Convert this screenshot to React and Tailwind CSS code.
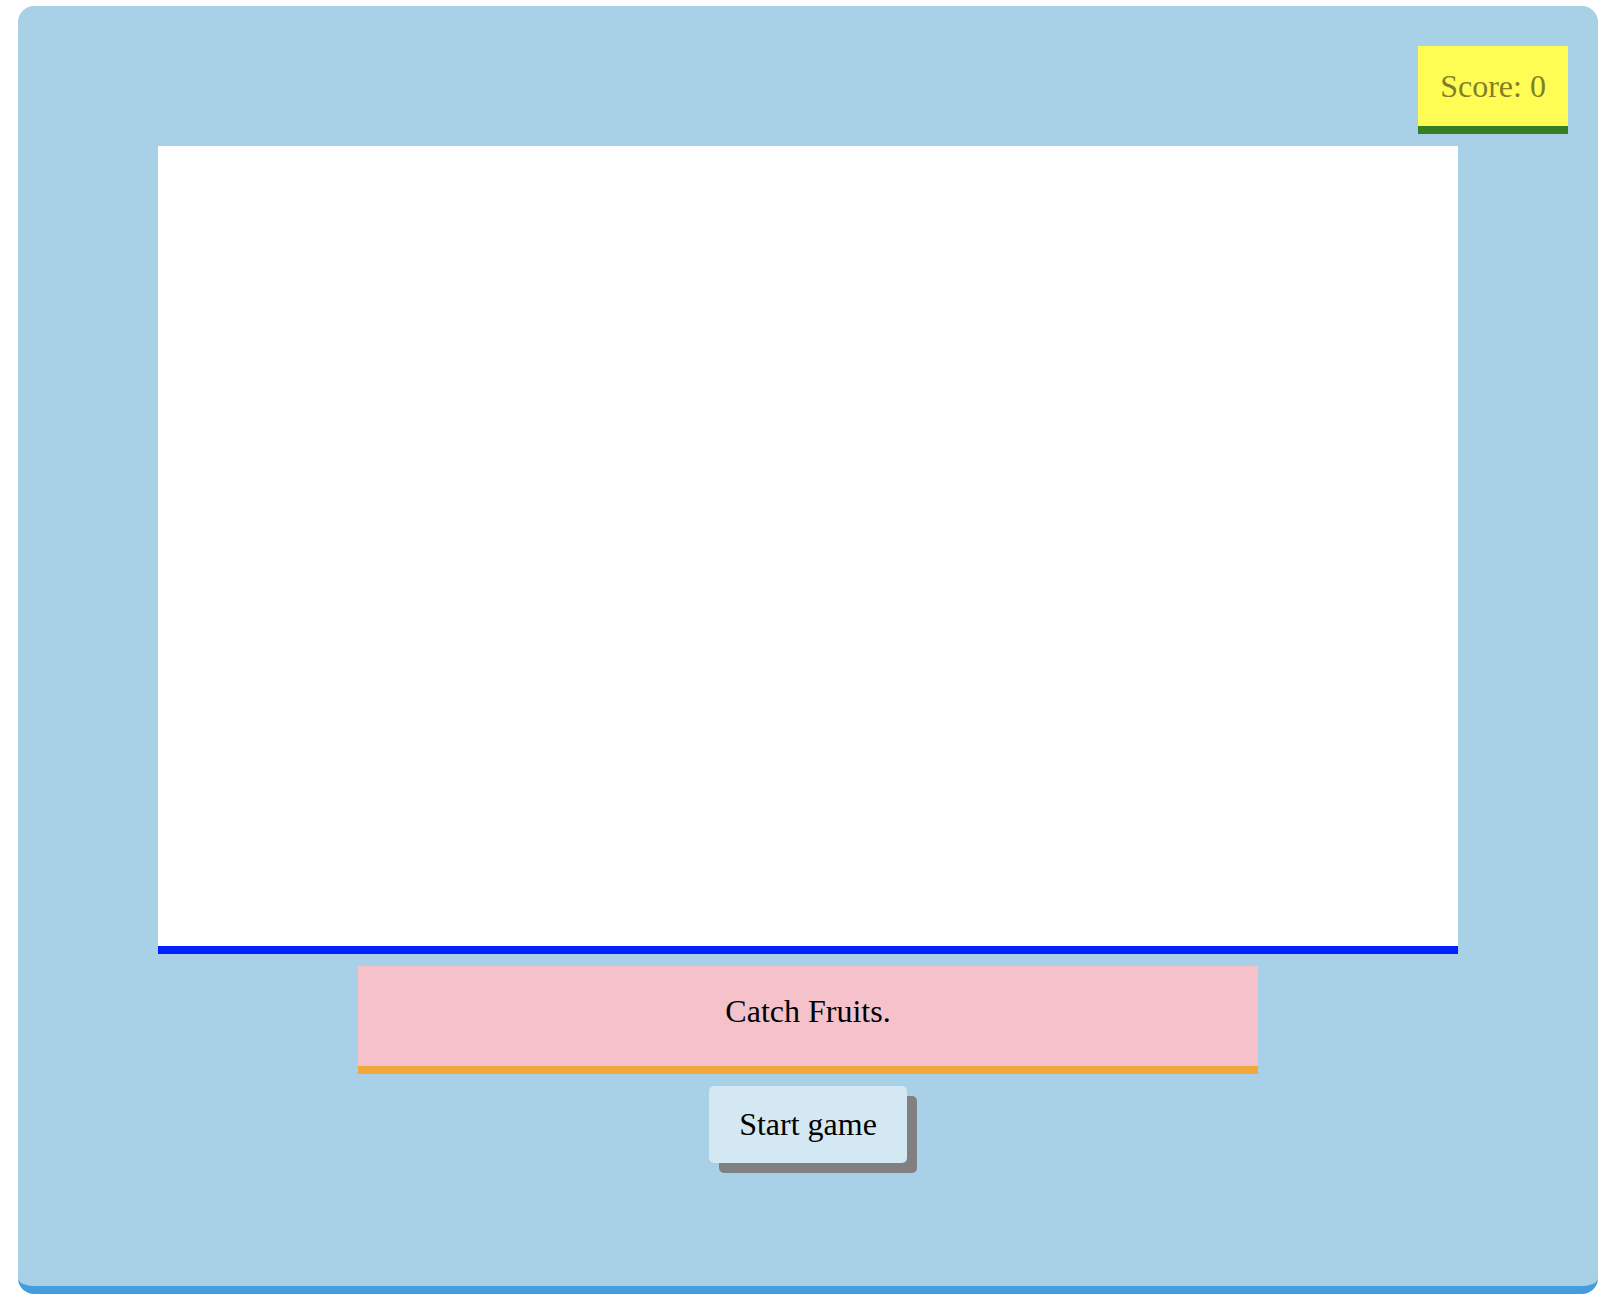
import { useState } from "react";

// Fruit catcher shell: score badge, play field, message strip and start button.
export default function App() {
  const [score] = useState(0);
  const [message] = useState("Catch Fruits.");

  return (
    <div className="min-h-screen bg-white pt-[6px] pl-[18px] font-['Liberation_Serif',serif]">
      <div className="w-[1580px] h-[1288px] rounded-2xl border-b-8 border-[#449ddf] bg-[#a8d0e6] pt-10">
        <div className="flex justify-end pr-[30px]">
          <div className="w-[150px] h-[88px] border-b-8 border-[#367f23] bg-[#fffd54] flex items-center justify-center text-[32px] leading-[normal] text-[#80802a]">
            Score: {score}
          </div>
        </div>

        <div className="mx-auto mt-3 w-[1300px] h-[808px] border-b-8 border-[#0022ff] bg-white" />

        <div className="mx-auto mt-3 w-[900px] h-[108px] border-b-8 border-[#f2a73b] bg-[#f5c2cb] pt-[27px] text-center text-[32px] leading-[normal] text-black">
          {message}
        </div>

        <div className="mt-3 flex justify-center">
          <button className="rounded-[5px] bg-[#d4e8f4] px-[30px] py-5 text-[32px] leading-[normal] text-black shadow-[10px_10px_0_#808080]">
            Start game
          </button>
        </div>
      </div>
    </div>
  );
}
